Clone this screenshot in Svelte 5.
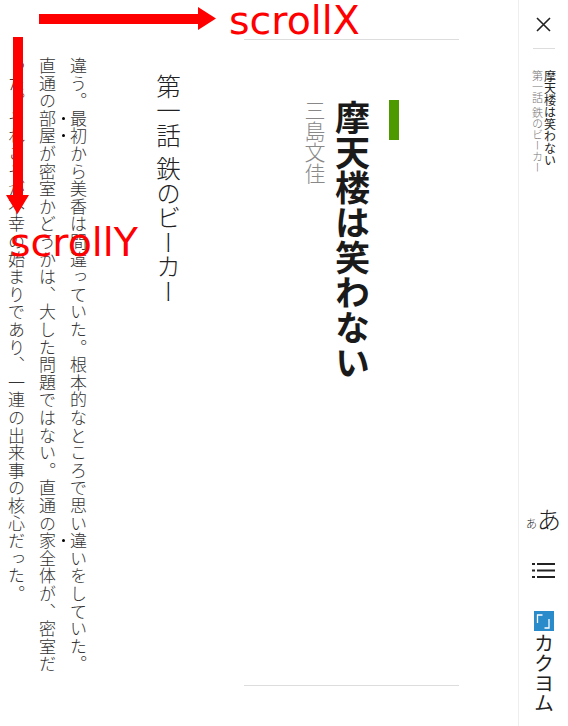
<script>
  const overlayFont = 'scroll';
</script>

<div class="page">
  <main class="reader">
    <section class="cover">
      <div class="bar"></div>
      <h1 class="work-title">摩天楼は笑わない</h1>
      <p class="author">三島文佳</p>
    </section>
    <h2 class="chapter">第一話 鉄のビーカー</h2>
    <div class="body">
      <p>違う。最初から美香は間違っていた。根本的なところで思い違いをしていた。</p>
      <p>直通の<em>部</em><em>屋</em>が密室かどうかは、大した問題ではない。直通の<em>家</em>全体が、密室だった。それこそが不幸の始まりであり、一連の出来事の核心だった。</p>
    </div>
  </main>

  <aside class="side">
    <button class="close" aria-label="閉じる">
      <svg width="15" height="15" viewBox="0 0 15 15"><path d="M1 1 L14 14 M14 1 L1 14" stroke="#222" stroke-width="1.6" fill="none" /></svg>
    </button>
    <div class="rule"></div>
    <div class="side-titles">
      <div class="side-work">摩天楼は笑わない</div>
      <div class="side-chapter">第一話 鉄のビーカー</div>
    </div>
    <div class="tools">
      <div class="font-size"><span class="small">あ</span><span class="large">あ</span></div>
      <svg class="list" width="23" height="17" viewBox="0 0 23 17">
        <rect x="0" y="1" width="3" height="2" fill="#222" />
        <rect x="5" y="1" width="18" height="2" fill="#222" />
        <rect x="0" y="7.500" width="3" height="2" fill="#222" />
        <rect x="5" y="7.500" width="18" height="2" fill="#222" />
        <rect x="0" y="14" width="3" height="2" fill="#222" />
        <rect x="5" y="14" width="18" height="2" fill="#222" />
      </svg>
      <div class="logo">
        <svg width="20" height="20" viewBox="0 0 20 20">
          <rect width="20" height="20" fill="#2a8bca" />
          <path d="M8.500 4 H3.500 V12 M10.500 17 H15 V8" stroke="#fff" stroke-width="1.300" fill="none" />
        </svg>
        <span class="logo-text">カクヨム</span>
      </div>
    </div>
  </aside>

  <div class="arrow-x"><svg width="177" height="23" viewBox="0 0 177 23"><path d="M0 7 H159 V0 L177 11.500 L159 23 V17 H0 Z" fill="#f00" /></svg></div>
  <div class="label-x">{overlayFont}X</div>
  <div class="arrow-y"><svg width="23" height="177" viewBox="0 0 23 177"><path d="M7 0 V158 H0 L11.500 177 L23 158 H17 V0 Z" fill="#f00" /></svg></div>
  <div class="label-y">{overlayFont}Y</div>
</div>

<style>
  :global(body) {
    margin: 0;
    background: #fff;
  }
  .page {
    position: relative;
    display: flex;
    width: 568px;
    height: 726px;
    overflow: hidden;
    font-family: "Noto Sans CJK JP", sans-serif;
  }
  .reader {
    flex: 1;
    min-width: 0;
    height: 726px;
    overflow: hidden;
    writing-mode: vertical-rl;
    padding-right: 59px;
    box-sizing: border-box;
  }
  .cover {
    display: flow-root;
    width: 215px;
    height: 647px;
    margin-top: 39px;
    padding-top: 60px;
    box-sizing: border-box;
    border-top: 1px solid #ddd;
    border-bottom: 1px solid #ddd;
  }
  .bar {
    width: 10px;
    height: 40px;
    margin-right: 60px;
    background: #4c9a00;
  }
  .work-title {
    margin: 0 19px 0 0;
    font-size: 35px;
    line-height: 35px;
    font-weight: 700;
    color: #1a1a1a;
  }
  .author {
    margin: 0 10px 0 0;
    font-size: 21px;
    line-height: 21px;
    font-weight: 300;
    color: #888;
  }
  .chapter {
    margin: 74px 64px 0 0;
    font-size: 24.500px;
    line-height: 24px;
    font-weight: 300;
    word-spacing: 4px;
    color: #222;
    white-space: nowrap;
  }
  .body {
    margin: 57px 62px 0 0;
    height: 618px;
    font-size: 17px;
    line-height: 31px;
    letter-spacing: 0.600px;
    font-weight: 300;
    color: #333;
  }
  .body p {
    margin: 0;
  }
  .body em {
    position: relative;
    font-style: normal;
  }
  .body em::after {
    content: "";
    position: absolute;
    top: 7px;
    right: -5px;
    width: 3px;
    height: 3px;
    border-radius: 50%;
    background: #000;
  }
  .side {
    flex: 0 0 50px;
    box-sizing: border-box;
    height: 726px;
    border-left: 1px solid #eee;
    display: flex;
    flex-direction: column;
    align-items: center;
  }
  .close {
    display: block;
    width: 15px;
    height: 15px;
    margin-top: 17px;
    padding: 0;
    border: 0;
    background: none;
  }
  .rule {
    width: 22px;
    height: 1px;
    margin-top: 16px;
    background: #ddd;
  }
  .side-titles {
    margin-top: 21px;
    height: 110px;
    writing-mode: vertical-rl;
    white-space: nowrap;
  }
  .side-work {
    font-size: 12px;
    line-height: 13px;
    font-weight: 400;
    color: #222;
  }
  .side-chapter {
    font-size: 11px;
    line-height: 13px;
    font-weight: 300;
    word-spacing: 2px;
    color: #777;
  }
  .tools {
    margin-top: auto;
    display: flex;
    flex-direction: column;
    align-items: center;
    padding-bottom: 13px;
  }
  .font-size {
    display: flex;
    align-items: flex-end;
    height: 26px;
    font-weight: 300;
    color: #222;
    line-height: 1;
  }
  .small {
    font-size: 11px;
    margin-bottom: 2px;
  }
  .large {
    font-size: 24px;
  }
  .list {
    display: block;
    margin-top: 31px;
  }
  .logo {
    margin-top: 32px;
    display: flex;
    flex-direction: column;
    align-items: center;
  }
  .logo svg {
    display: block;
  }
  .logo-text {
    margin-top: 2px;
    writing-mode: vertical-rl;
    font-size: 20px;
    line-height: 20px;
    font-weight: 400;
    color: #222;
  }
  .arrow-x {
    position: absolute;
    left: 39px;
    top: 7px;
    line-height: 0;
  }
  .arrow-y {
    position: absolute;
    left: 6px;
    top: 37px;
    line-height: 0;
  }
  .label-x,
  .label-y {
    position: absolute;
    font-family: "DejaVu Sans", sans-serif;
    font-size: 39.500px;
    line-height: 40px;
    color: #f00;
  }
  .label-x {
    left: 229px;
    top: 0;
  }
  .label-y {
    left: 10px;
    top: 222px;
  }
</style>
